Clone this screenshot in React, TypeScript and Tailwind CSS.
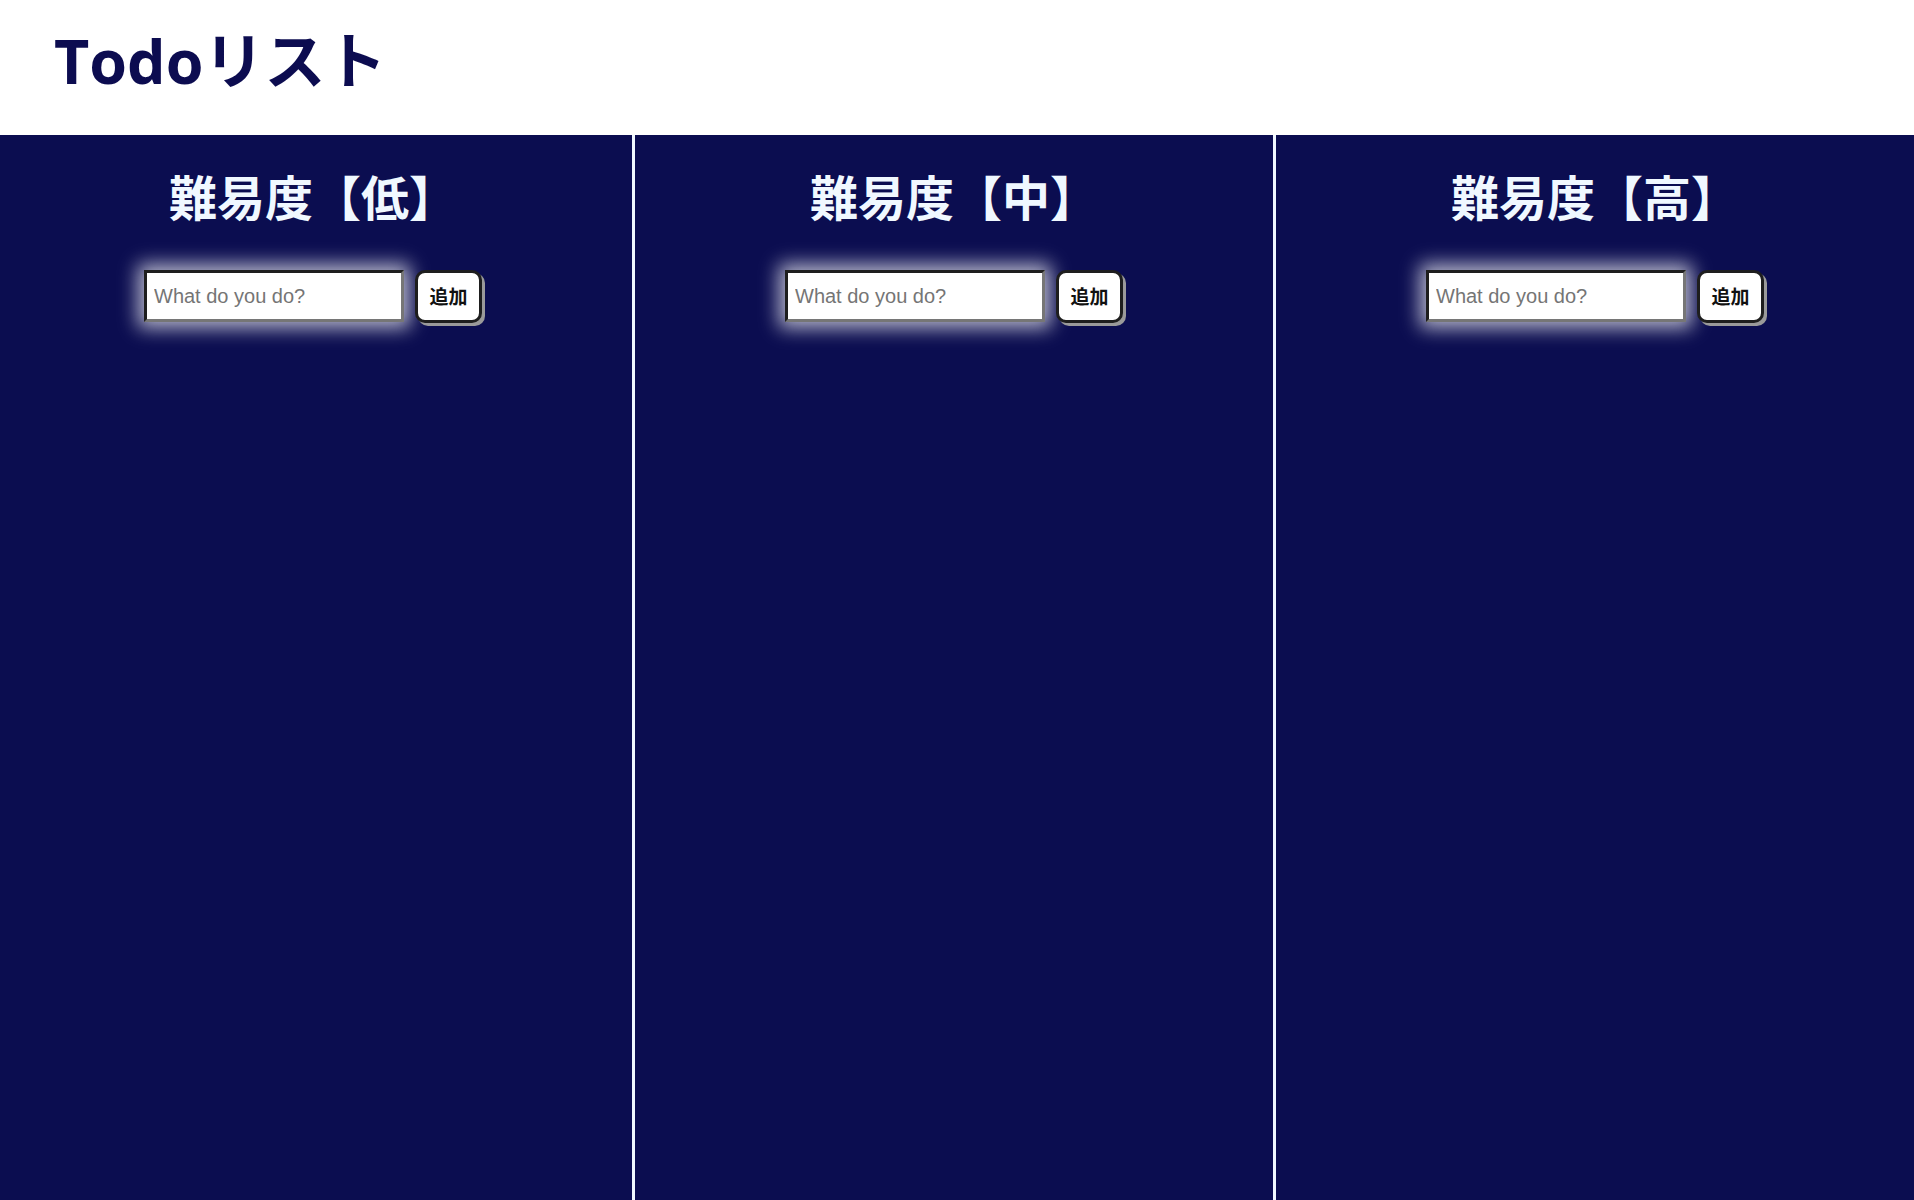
const levels = ["低", "中", "高"];

function Column({ level, first }: { level: string; first?: boolean }) {
  return (
    <div className={`w-[638px] shrink-0 ${first ? "-ml-[6px]" : ""} bg-[#0b0d50] flex flex-col items-center pt-[36px]`}>
      <h2 className="text-[48px] leading-none font-bold text-[#f0f8ff] [font-family:'Noto_Sans_CJK_JP',sans-serif]">
        難易度【{level}】
      </h2>
      <div className="flex items-start gap-[11px] mt-[51px]">
        <input
          type="text"
          placeholder="What do you do?"
          className="w-[260px] h-[52px] bg-white border-[3px] border-t-[#1e1e1e] border-l-[#1e1e1e] border-b-[#767676] border-r-[#767676] px-[7px] text-[20px] text-black placeholder:text-[#757575] outline-none shadow-[0_0_18px_6px_rgba(255,255,255,0.7)] [font-family:'Liberation_Sans',Arial,sans-serif]"
        />
        <button className="w-[67px] h-[53px] bg-white border-[3px] border-[#1e1e1e] rounded-[10px] shadow-[3px_3px_0_#9a9a9a] text-[19px] font-bold text-[#111] [font-family:'Noto_Sans_CJK_JP',sans-serif]">
          追加
        </button>
      </div>
    </div>
  );
}

export default function App() {
  return (
    <div className="min-h-screen bg-white flex flex-col overflow-hidden">
      <header className="h-[135px] flex items-center px-[54px]">
        <h1 className="text-[61px] font-bold leading-none text-[#0c0c50] -mt-[14px] [font-family:'Open_Sans','Noto_Sans_CJK_JP',sans-serif]">
          Todoリスト
        </h1>
      </header>
      <main className="flex-1 flex gap-[3px] bg-[#f0f8ff] min-h-[1065px]">
        {levels.map((l, i) => (
          <Column key={l} level={l} first={i === 0} />
        ))}
      </main>
    </div>
  );
}
